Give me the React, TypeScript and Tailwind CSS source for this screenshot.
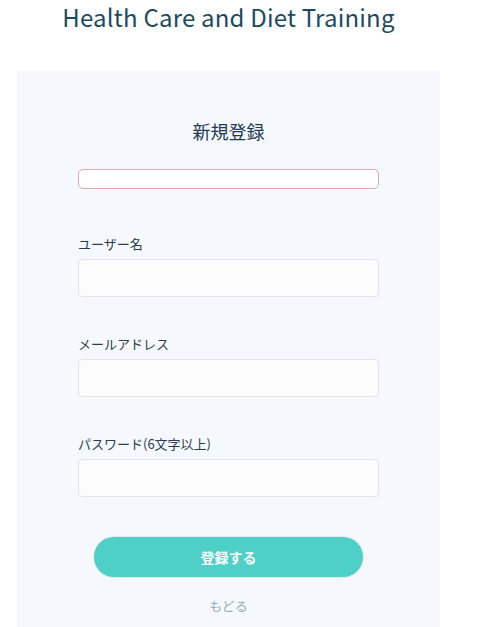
import React from 'react'

const FONT = { fontFamily: '"Noto Sans CJK JP", "Noto Sans", sans-serif' }

function Field({ label, type = 'text' }: { label: string; type?: string }) {
    return (
        <div className="flex flex-col">
            <label className="text-[13px] leading-[20px] text-[#2a3d4f] mb-[5px]">{label}</label>
            <input
                type={type}
                className="h-[38px] w-full rounded-[4px] border border-[#dde4ee] bg-[#fcfcfd] px-3 text-sm outline-none"
            />
        </div>
    )
}

export default function App() {
    return (
        <div style={FONT} className="min-h-screen bg-white">
            <div className="w-[423px] ml-[17px]">
                <h1 className="text-center text-[24px] leading-[34px] text-[#1c4a62] tracking-[0.2px]">
                    Health Care and Diet Training
                </h1>

                {/* カード */}
                <div className="mt-[37px] bg-[#f5f9fe] px-[61px] pt-[47px] pb-[20px] min-h-[560px]">
                    <h2 className="text-center text-[18px] leading-[27px] text-[#1f3a52]">新規登録</h2>

                    <div className="mt-[24px] h-[20px] rounded-[5px] border border-[#e8a6ad] bg-white" />

                    <div className="mt-[45px] flex flex-col gap-[37px]">
                        <Field label="ユーザー名" />
                        <Field label="メールアドレス" type="email" />
                        <Field label="パスワード(6文字以上)" type="password" />
                    </div>

                    <div className="mt-[40px] flex justify-center">
                        <button className="h-[40px] w-[269px] rounded-full bg-[#4ecfc7] text-white text-[14px] font-bold shadow-[0_0_0_1px_rgba(0,0,0,0.06)]">
                            登録する
                        </button>
                    </div>

                    <div className="mt-[19px] text-center text-[13px] leading-[20px] text-[#9aa8bc]">もどる</div>
                </div>
            </div>
        </div>
    )
}
